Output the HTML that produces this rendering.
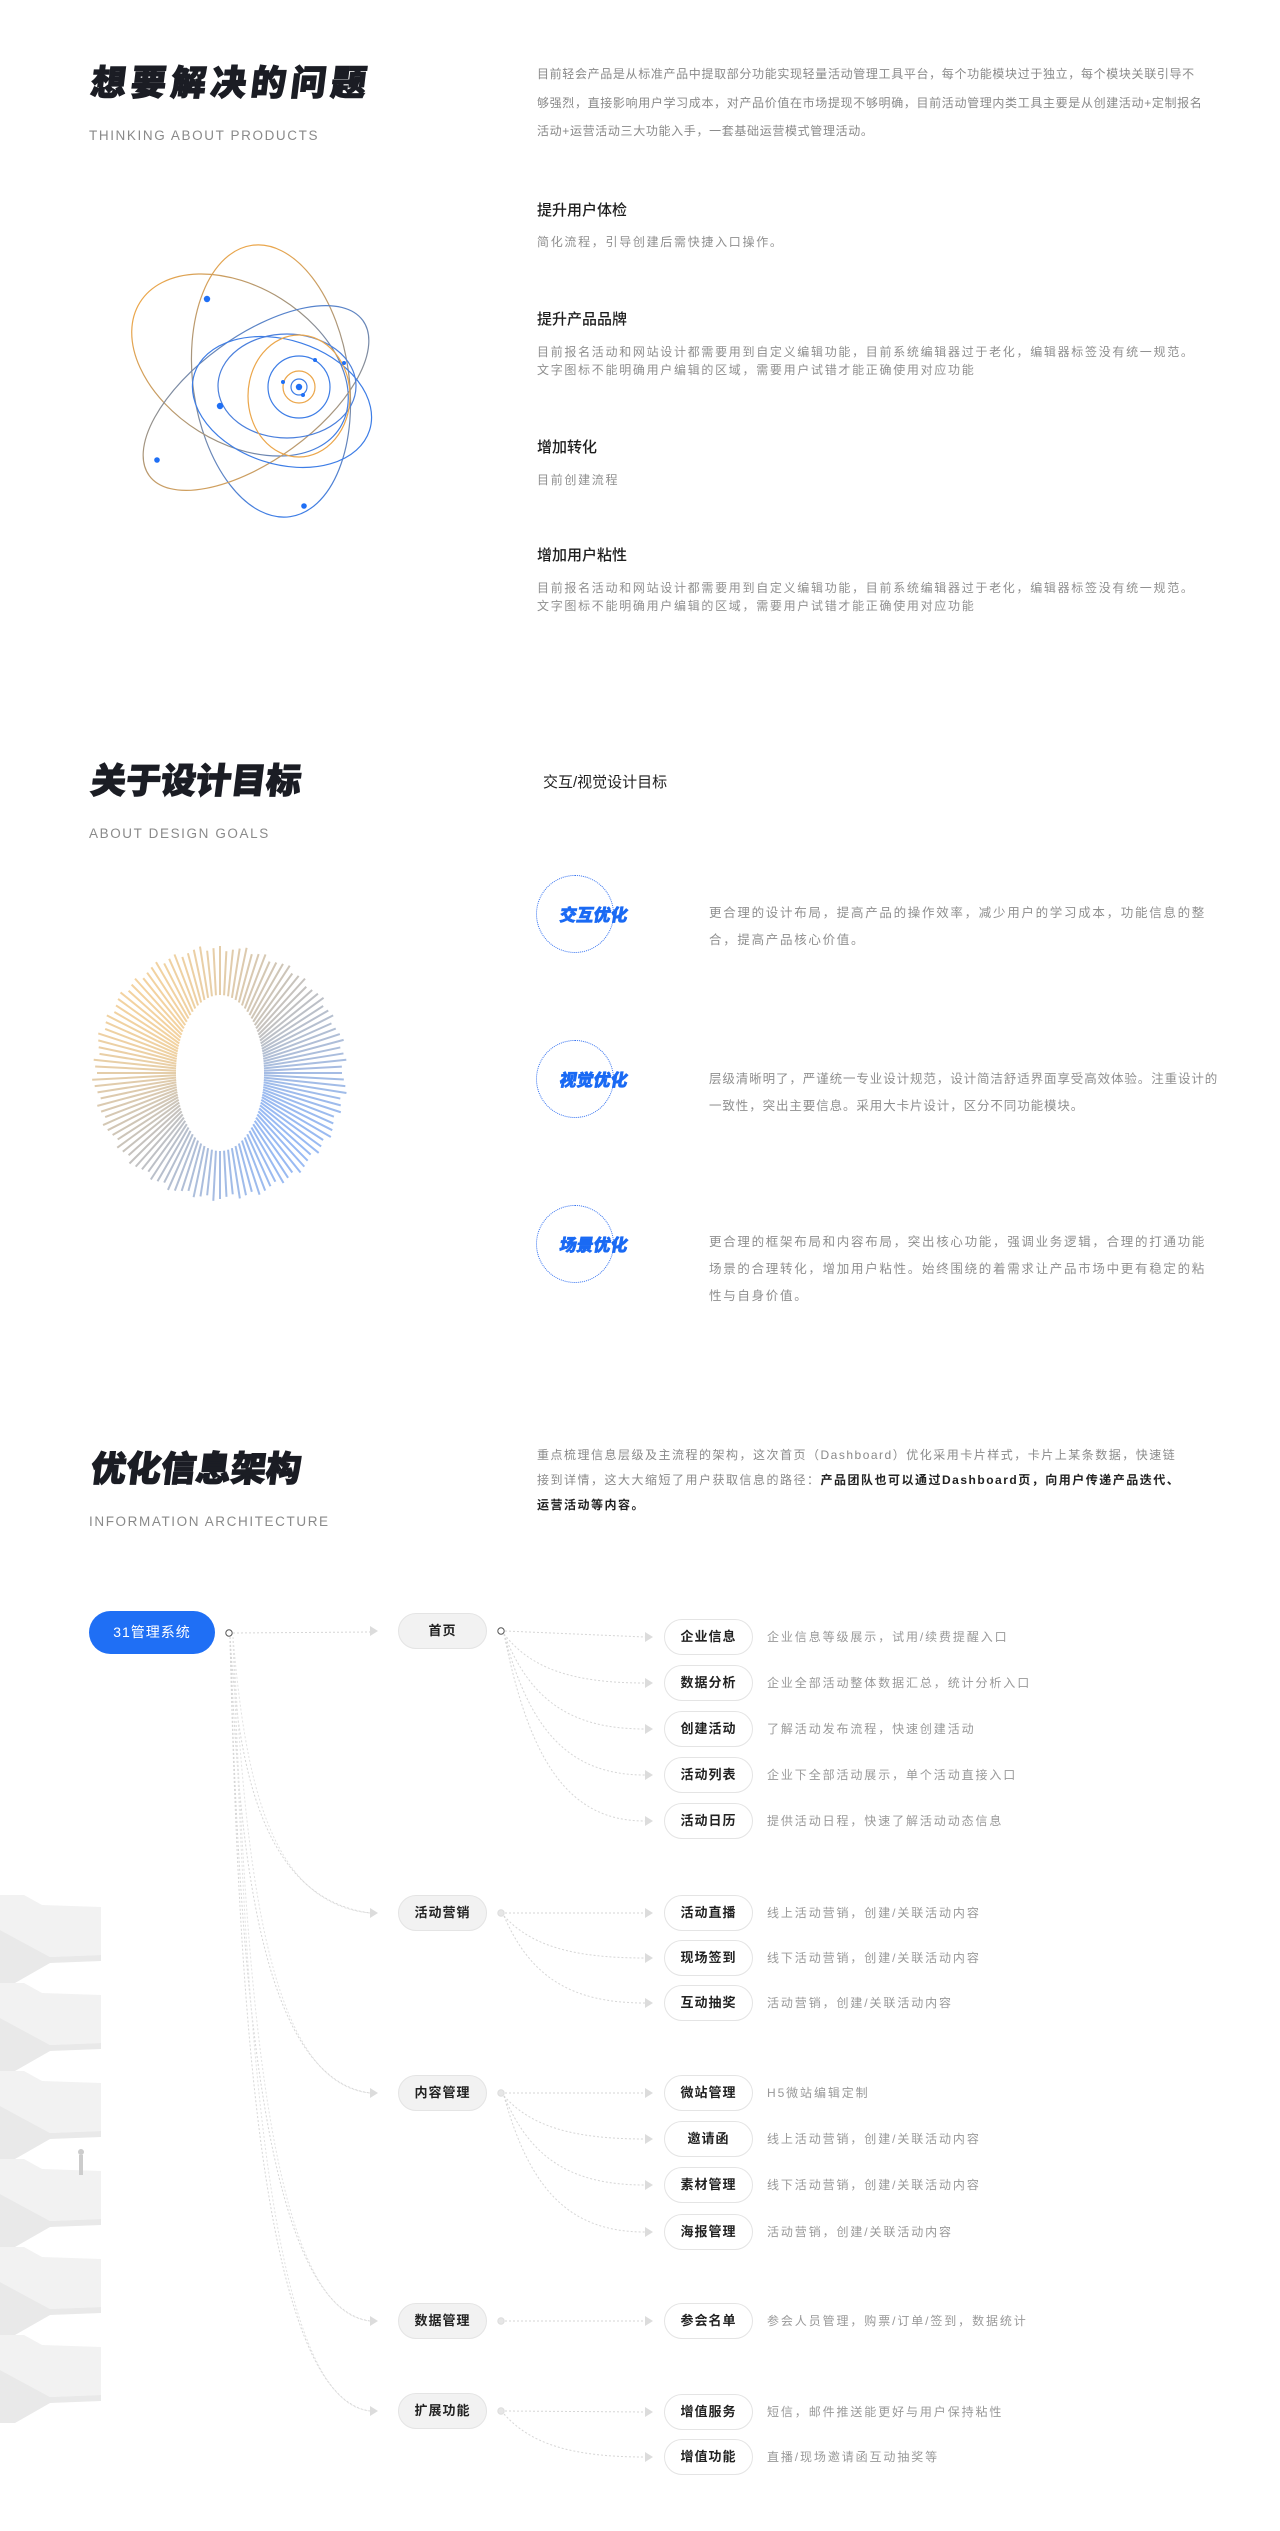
<!DOCTYPE html>
<html><head><meta charset="utf-8">
<style>
*{margin:0;padding:0;box-sizing:border-box}
html,body{width:1280px;height:2531px;background:#fff;overflow:hidden}
body{position:relative;font-family:"Liberation Sans","Noto Sans CJK SC",sans-serif;color:#222}
.a{position:absolute;white-space:nowrap}
.title{font-family:"Noto Sans CJK SC",sans-serif;font-weight:900;font-size:35px;color:#1b1d24;line-height:40px;transform:skewX(-7deg);transform-origin:left bottom;-webkit-text-stroke:1.2px #1b1d24}
.sub{font-size:13.5px;letter-spacing:1.6px;color:#8a8a8a;line-height:16px}
.p{font-size:12px;color:#8a8a8a;letter-spacing:.65px;line-height:28.5px}
.h{font-size:15px;color:#1e1e1e;font-weight:500;line-height:20px}
.d{font-size:12px;color:#8f8f8f;letter-spacing:1.7px;line-height:18px}
.gd{font-size:12.5px;color:#8f8f8f;letter-spacing:1.7px;line-height:27px}
.ring{position:absolute;width:78px;height:78px;border:1.5px dotted #2c6cf0;border-radius:50%}
.gl{position:absolute;font-family:"Noto Sans CJK SC",sans-serif;font-weight:900;font-size:17px;color:#1a6af4;transform:skewX(-10deg);-webkit-text-stroke:.6px #1a6af4;line-height:20px;white-space:nowrap}
.n2{position:absolute;width:89px;height:36px;border-radius:18px;background:#f2f2f2;border:1px solid #e4e4e4;font-size:13px;font-weight:bold;color:#222;text-align:center;line-height:34px;letter-spacing:1px}
.n3{position:absolute;width:89px;height:36px;border-radius:18px;background:#fff;border:1px solid #e4e4e4;font-size:13px;font-weight:bold;color:#222;text-align:center;line-height:34px;letter-spacing:1px}
.t3{position:absolute;font-size:12px;color:#999;letter-spacing:1.9px;line-height:16px;white-space:nowrap}
</style></head><body>

<div class="a title" style="left:89px;top:61px;letter-spacing:5px">想要解决的问题</div>
<div class="a sub" style="left:89px;top:128px">THINKING ABOUT PRODUCTS</div>
<div class="a p" style="left:537px;top:60px">目前轻会产品是从标准产品中提取部分功能实现轻量活动管理工具平台，每个功能模块过于独立，每个模块关联引导不<br>够强烈，直接影响用户学习成本，对产品价值在市场提现不够明确，目前活动管理内类工具主要是从创建活动+定制报名<br>活动+运营活动三大功能入手，一套基础运营模式管理活动。</div>

<div class="a h" style="left:537px;top:201px">提升用户体检</div>
<div class="a d" style="left:537px;top:233px">简化流程，引导创建后需快捷入口操作。</div>
<div class="a h" style="left:537px;top:310px">提升产品品牌</div>
<div class="a d" style="left:537px;top:343px">目前报名活动和网站设计都需要用到自定义编辑功能，目前系统编辑器过于老化，编辑器标签没有统一规范。<br>文字图标不能明确用户编辑的区域，需要用户试错才能正确使用对应功能</div>
<div class="a h" style="left:537px;top:438px">增加转化</div>
<div class="a d" style="left:537px;top:471px">目前创建流程</div>
<div class="a h" style="left:537px;top:546px">增加用户粘性</div>
<div class="a d" style="left:537px;top:579px">目前报名活动和网站设计都需要用到自定义编辑功能，目前系统编辑器过于老化，编辑器标签没有统一规范。<br>文字图标不能明确用户编辑的区域，需要用户试错才能正确使用对应功能</div>

<svg class="a" style="left:0;top:0" width="500" height="560" viewBox="0 0 500 560">
<defs>
<linearGradient id="g1" x1="0" y1="0" x2="0" y2="1"><stop offset="0" stop-color="#eba64a"/><stop offset=".5" stop-color="#8f8f8f"/><stop offset="1" stop-color="#3d7de6"/></linearGradient>
<linearGradient id="g2" x1="0" y1="0" x2="1" y2="0"><stop offset="0" stop-color="#eba64a"/><stop offset=".6" stop-color="#9a9080"/><stop offset="1" stop-color="#3d7de6"/></linearGradient>
<linearGradient id="g3" x1="0" y1="1" x2="1" y2="0"><stop offset="0" stop-color="#eba64a"/><stop offset=".5" stop-color="#8f8f8f"/><stop offset="1" stop-color="#3d7de6"/></linearGradient>
</defs>
<g fill="none" stroke-width="1.2">
<ellipse cx="271" cy="381" rx="78" ry="137" transform="rotate(-8 271 381)" stroke="url(#g1)"/>
<ellipse cx="240" cy="365" rx="118" ry="78" transform="rotate(32 240 365)" stroke="url(#g2)"/>
<ellipse cx="256" cy="398" rx="132" ry="62" transform="rotate(-36 256 398)" stroke="url(#g3)"/>
<ellipse cx="282" cy="402" rx="92" ry="62" transform="rotate(18 282 402)" stroke="#3d7de6"/>
<ellipse cx="287" cy="386" rx="69" ry="52" stroke="#4a7fdc"/>
<ellipse cx="299" cy="396" rx="51" ry="61" stroke="#eba64a"/>
<circle cx="299" cy="387" r="31" stroke="#3d7de6"/>
<circle cx="299" cy="387" r="16" stroke="#eba64a"/>
<circle cx="299" cy="387" r="8" stroke="#3d7de6"/>
</g>
<g fill="#1f6ff5">
<circle cx="299" cy="387" r="3.2"/><circle cx="207" cy="299" r="3.2"/><circle cx="220" cy="406" r="3.2"/><circle cx="157" cy="460" r="2.8"/><circle cx="304" cy="506" r="2.8"/><circle cx="344" cy="363" r="2"/><circle cx="315" cy="360" r="2"/><circle cx="283" cy="382" r="2"/><circle cx="303" cy="395" r="2"/>
</g>
</svg>

<div class="a title" style="left:89px;top:759px">关于设计目标</div>
<div class="a sub" style="left:89px;top:826px">ABOUT DESIGN GOALS</div>
<div class="a" style="left:543px;top:774px;font-size:15px;color:#222;line-height:18px">交互/视觉设计目标</div>

<svg id="rays" class="a" style="left:80px;top:930px" width="280" height="290" viewBox="0 0 280 290"></svg>

<div class="ring" style="left:536px;top:875px"></div>
<div class="gl" style="left:560px;top:904px">交互优化</div>
<div class="a gd" style="left:709px;top:900px">更合理的设计布局，提高产品的操作效率，减少用户的学习成本，功能信息的整<br>合，提高产品核心价值。</div>

<div class="ring" style="left:536px;top:1040px"></div>
<div class="gl" style="left:560px;top:1069px">视觉优化</div>
<div class="a gd" style="left:709px;top:1066px;letter-spacing:.9px">层级清晰明了，严谨统一专业设计规范，设计简洁舒适界面享受高效体验。注重设计的<br>一致性，突出主要信息。采用大卡片设计，区分不同功能模块。</div>

<div class="ring" style="left:536px;top:1205px"></div>
<div class="gl" style="left:560px;top:1234px">场景优化</div>
<div class="a gd" style="left:709px;top:1229px">更合理的框架布局和内容布局，突出核心功能，强调业务逻辑，合理的打通功能<br>场景的合理转化，增加用户粘性。始终围绕的着需求让产品市场中更有稳定的粘<br>性与自身价值。</div>

<div class="a title" style="left:89px;top:1447px">优化信息架构</div>
<div class="a sub" style="left:89px;top:1514px">INFORMATION ARCHITECTURE</div>
<div class="a p" style="left:537px;top:1443px;line-height:25px;letter-spacing:1.5px">重点梳理信息层级及主流程的架构，这次首页（Dashboard）优化采用卡片样式，卡片上某条数据，快速链<br>接到详情，这大大缩短了用户获取信息的路径：<b style="color:#222">产品团队也可以通过Dashboard页，向用户传递产品迭代、<br>运营活动等内容。</b></div>

<svg class="a" style="left:0;top:1895px" width="104" height="530" viewBox="0 0 104 530" id="stairs"></svg>

<svg id="tree" class="a" style="left:0;top:1580px" width="700" height="900" viewBox="0 1580 700 900"></svg>

<div class="a" style="left:89px;top:1611px;width:126px;height:43px;border-radius:22px;background:#1f6ff5;color:#fff;font-size:14px;text-align:center;line-height:43px;letter-spacing:1px">31管理系统</div>

<div class="n2" style="left:398px;top:1613px">首页</div>
<div class="n2" style="left:398px;top:1895px">活动营销</div>
<div class="n2" style="left:398px;top:2075px">内容管理</div>
<div class="n2" style="left:398px;top:2303px">数据管理</div>
<div class="n2" style="left:398px;top:2393px">扩展功能</div>

<div id="l3"></div>

<script>
(function(){
var ns="http://www.w3.org/2000/svg";
var s=document.getElementById('rays');var cx=140,cy=143;
var N=120;
function mix(a,b,t){return [0,1,2].map(function(i){return Math.round(a[i]+(b[i]-a[i])*t)})}
var O=[238,192,120],G=[170,168,165],B=[110,158,238];
for(var i=0;i<N;i++){
 var a=i/N*Math.PI*2;var c=Math.cos(a),sn=Math.sin(a);
 var ri=1/Math.sqrt((c*c)/(44*44)+(sn*sn)/(78*78));
 var ro=125+((i*37)%7)-3;
 var t=((c+sn)/Math.SQRT2+1)/2;
 var col=t<.5?mix(O,G,t*2):mix(G,B,(t-.5)*2);
 var l=document.createElementNS(ns,'line');
 l.setAttribute('x1',cx+c*ri);l.setAttribute('y1',cy+sn*ri);
 l.setAttribute('x2',cx+c*ro);l.setAttribute('y2',cy+sn*ro);
 l.setAttribute('stroke','rgb('+col.join(',')+')');l.setAttribute('stroke-width','2');l.setAttribute('opacity','.7');
 s.appendChild(l);
}
var st=document.getElementById('stairs');var h='';
for(var k=0;k<6;k++){var y=k*88;
 h+='<polygon points="0,'+(y+0)+' 24,'+(y)+' 42,'+(y+10)+' 101,'+(y+12)+' 101,'+(y+60)+' 50,'+(y+62)+' 0,'+(y+35)+'" fill="#f2f2f2"/>';
 h+='<polygon points="0,'+(y+35)+' 50,'+(y+62)+' 101,'+(y+60)+' 101,'+(y+66)+' 50,'+(y+68)+' 15,'+(y+88)+' 0,'+(y+88)+'" fill="#e9e9e9"/>';
}
st.innerHTML=h+'<rect x="79" y="260" width="4" height="20" fill="#ccc"/><circle cx="81" cy="257" r="3" fill="#ccc"/>';
var tr=document.getElementById('tree');var th='';
function arrow(x,y){return '<polygon points="'+(x-8)+','+(y-5)+' '+x+','+y+' '+(x-8)+','+(y+5)+'" fill="#dcdcdc"/>';}
var L2=[1631,1913,2093,2321,2411];
th+='<circle cx="229" cy="1633" r="3.2" fill="#fff" stroke="#555" stroke-width="1"/>';
L2.forEach(function(y,i){
 if(i==0){th+='<path d="M233,1633 L370,1632" stroke="#d6d6d6" stroke-dasharray="2,2" fill="none"/>';}
 else{th+='<path d="M230,1637 C238,'+(1637+(y-1637)*0.45)+' 260,'+(y-15)+' 370,'+y+'" stroke="#d6d6d6" stroke-dasharray="2,2" fill="none"/>';
      th+='<path d="M233,1637 C245,'+(1637+(y-1637)*0.5)+' 268,'+(y-10)+' 370,'+y+'" stroke="#e2e2e2" stroke-dasharray="2,2" fill="none"/>';}
 th+=arrow(378,y);
 th+='<circle cx="501" cy="'+y+'" r="3.2" fill="'+(i==0?'#fff':'#e6e6e6')+'" stroke="'+(i==0?'#555':'#ddd')+'" stroke-width="1"/>';
});
var L3=[
[0,'企业信息','企业信息等级展示，试用/续费提醒入口',1637],
[0,'数据分析','企业全部活动整体数据汇总，统计分析入口',1683],
[0,'创建活动','了解活动发布流程，快速创建活动',1729],
[0,'活动列表','企业下全部活动展示，单个活动直接入口',1775],
[0,'活动日历','提供活动日程，快速了解活动动态信息',1821],
[1,'活动直播','线上活动营销，创建/关联活动内容',1913],
[1,'现场签到','线下活动营销，创建/关联活动内容',1958],
[1,'互动抽奖','活动营销，创建/关联活动内容',2003],
[2,'微站管理','H5微站编辑定制',2093],
[2,'邀请函','线上活动营销，创建/关联活动内容',2139],
[2,'素材管理','线下活动营销，创建/关联活动内容',2185],
[2,'海报管理','活动营销，创建/关联活动内容',2232],
[3,'参会名单','参会人员管理，购票/订单/签到，数据统计',2321],
[4,'增值服务','短信，邮件推送能更好与用户保持粘性',2412],
[4,'增值功能','直播/现场邀请函互动抽奖等',2457]];
var hh='';
L3.forEach(function(r){
 var y0=L2[r[0]],y=r[3];
 if(Math.abs(y-y0)<8){th+='<path d="M505,'+y0+' L645,'+y+'" stroke="#d6d6d6" stroke-dasharray="2,2" fill="none"/>';}
 else{th+='<path d="M504,'+(y0+3)+' C530,'+(y0+(y-y0)*0.7)+' 570,'+y+' 645,'+y+'" stroke="#d6d6d6" stroke-dasharray="2,2" fill="none"/>';}
 th+=arrow(653,y);
 hh+='<div class="n3" style="left:664px;top:'+(y-18)+'px">'+r[1]+'</div>';
 hh+='<div class="t3" style="left:767px;top:'+(y-8)+'px">'+r[2]+'</div>';
});
tr.innerHTML=th;
document.getElementById('l3').innerHTML=hh;
})();
</script>
</body></html>
